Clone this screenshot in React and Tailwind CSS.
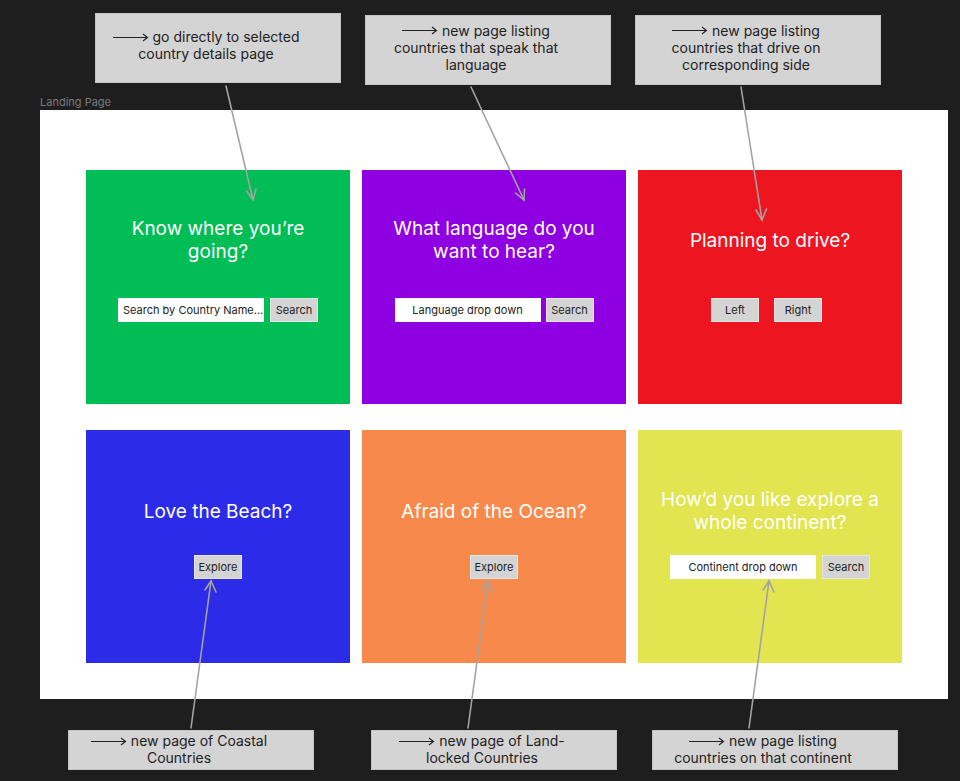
import React from "react";

const ink = "font-['Inter','Noto_Sans',sans-serif]";

// small long-arrow glyph used inside the annotation notes
const LongArrow = () => (
  <svg width="36" height="9" viewBox="0 0 36 9" className="inline-block mr-[4px] align-middle -mt-[2px]">
    <line x1="0" y1="4.5" x2="34" y2="4.5" stroke="#222" strokeWidth="1.1" />
    <path d="M30 1 L34.5 4.5 L30 8" fill="none" stroke="#222" strokeWidth="1.1" />
  </svg>
);

const Note = ({ className, lines }) => (
  <div
    className={`absolute w-[246px] bg-[#d4d4d4] border border-[#c4c4c4] flex flex-col items-center justify-center pl-[2px] pr-[26px] text-[14px] leading-[17px] text-[#222] ${ink} ${className}`}
  >
    {lines.map((l, i) => (
      <div key={i} className="whitespace-nowrap text-center">
        {i === 0 && <LongArrow />}
        {l}
      </div>
    ))}
  </div>
);

const Btn = ({ children }) => (
  <button className="h-6 w-12 bg-[#d4d4d4] border border-white/40 text-[11px] text-[#222] flex items-center justify-center whitespace-nowrap">
    {children}
  </button>
);

const Field = ({ children, left }) => (
  <div
    className={`h-6 w-[146px] bg-white border border-white/60 text-[11px] text-[#222] flex items-center whitespace-nowrap overflow-hidden ${left ? "justify-start pl-1" : "justify-center"}`}
  >
    {children}
  </div>
);

const Card = ({ bg, lines, row, children }) => (
  <div className={`${bg} flex flex-col items-center ${row === 1 ? "pt-[47px]" : "pt-[58px]"}`}>
    <div className="h-[46px] flex flex-col items-center justify-center text-white text-[19px] leading-[23px] text-center">
      {lines.map((l, i) => (
        <div key={i}>{l}</div>
      ))}
    </div>
    <div className={`flex items-center ${row === 1 ? "mt-[35px]" : "mt-[21px]"}`}>{children}</div>
  </div>
);

export default function App() {
  return (
    <div className={`relative w-[960px] h-[781px] bg-[#1e1e1e] overflow-hidden ${ink}`}>
      <Note className="left-[95px] top-[13px] h-[70px] pb-[6px]" lines={["go directly to selected", "country details page"]} />
      <Note className="left-[365px] top-[15px] h-[70px] pb-[6px]" lines={["new page listing", "countries that speak that", "language"]} />
      <Note className="left-[635px] top-[15px] h-[70px] pb-[6px]" lines={["new page listing", "countries that drive on", "corresponding side"]} />

      <div className="absolute left-[40px] top-[94px] text-[11px] text-[#7a7a7a]">Landing Page</div>

      <div className="absolute left-[40px] top-[110px] w-[908px] h-[589px] bg-white">
        <div className="grid grid-cols-[264px_264px_264px] grid-rows-[234px_233px] gap-x-3 gap-y-[26px] pl-[46px] pt-[60px]">
          <Card bg="bg-[#00bd55]" row={1} lines={["Know where you’re", "going?"]}>
            <Field left>Search by Country Name...</Field>
            <div className="w-[6px]" />
            <Btn>Search</Btn>
          </Card>
          <Card bg="bg-[#8e00e1]" row={1} lines={["What language do you", "want to hear?"]}>
            <Field>Language drop down</Field>
            <div className="w-[5px]" />
            <Btn>Search</Btn>
          </Card>
          <Card bg="bg-[#ed1520]" row={1} lines={["Planning to drive?"]}>
            <div className="flex items-center gap-[15px] pr-[7px]">
              <Btn>Left</Btn>
              <Btn>Right</Btn>
            </div>
          </Card>
          <Card bg="bg-[#2b2be8]" row={2} lines={["Love the Beach?"]}>
            <Btn>Explore</Btn>
          </Card>
          <Card bg="bg-[#f7894b]" row={2} lines={["Afraid of the Ocean?"]}>
            <Btn>Explore</Btn>
          </Card>
          <Card bg="bg-[#e2e550]" row={2} lines={["How’d you like explore a", "whole continent?"]}>
            <Field>Continent drop down</Field>
            <div className="w-[6px]" />
            <Btn>Search</Btn>
          </Card>
        </div>
      </div>

      <Note className="left-[68px] top-[730px] h-[40px] pb-[2px]" lines={["new page of Coastal", "Countries"]} />
      <Note className="left-[371px] top-[730px] h-[40px] pb-[2px]" lines={["new page of Land-", "locked Countries"]} />
      <Note className="left-[652px] top-[730px] h-[40px] pb-[2px]" lines={["new page listing", "countries on that continent"]} />

      {/* connector arrows drawn over the canvas */}
      <svg className="absolute inset-0 pointer-events-none" width="960" height="781" viewBox="0 0 960 781">
        <g stroke="#a3a3a3" strokeWidth="1.6" fill="none" strokeLinecap="round">
          <line x1="226" y1="86" x2="253" y2="200" />
          <path d="M246.5 191 L253 200 L256 189" />
          <line x1="471" y1="87" x2="524" y2="200" />
          <path d="M515.5 193 L524 200 L524.5 189" />
          <line x1="741" y1="87" x2="762" y2="220" />
          <path d="M756 210 L762 220 L766.5 209" />
          <line x1="191" y1="728" x2="211" y2="581" />
          <path d="M205 590 L211 581 L216 592" />
          <line x1="468" y1="728" x2="488" y2="581" />
          <path d="M482 590 L488 581 L493 592" />
          <line x1="749" y1="728" x2="769" y2="581" />
          <path d="M763 590 L769 581 L774 592" />
        </g>
      </svg>
    </div>
  );
}
